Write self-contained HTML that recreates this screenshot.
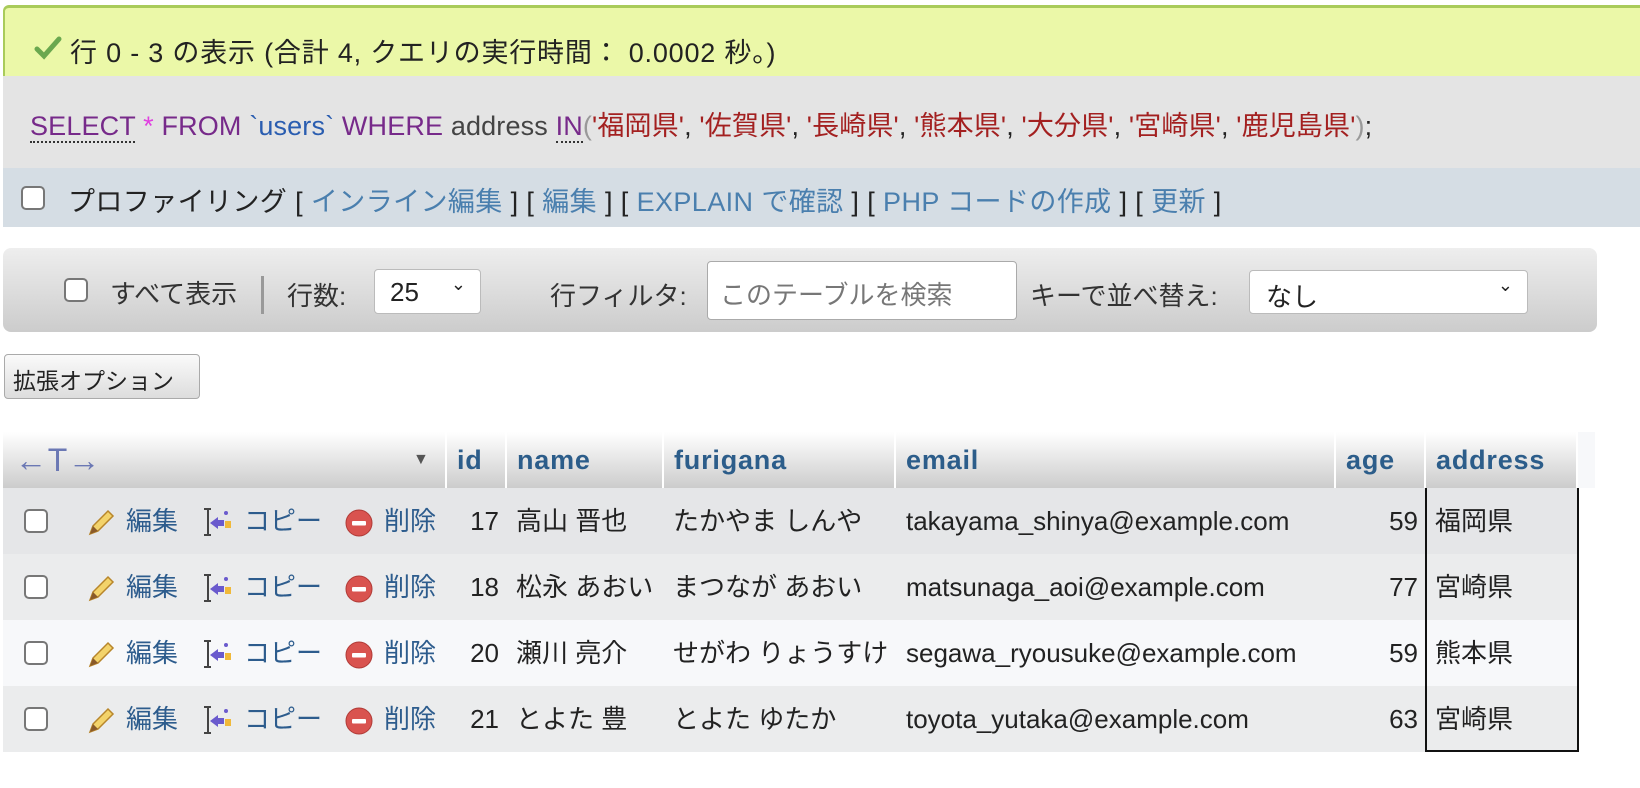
<!DOCTYPE html>
<html><head><meta charset="utf-8"><style>
*{box-sizing:border-box;margin:0;padding:0}
body{width:1640px;height:788px;background:#fff;font-family:"Liberation Sans","Noto Sans CJK JP",sans-serif;font-size:26px;color:#222;position:relative;overflow:hidden}
.a{position:absolute;white-space:nowrap}
.lk{color:#4a7fae}
.cb{position:absolute;width:24px;height:24px;border:2px solid #777;border-radius:5px;background:#fff}
.th{position:absolute;top:432px;height:56px;background:linear-gradient(#fff,#ccc);font-weight:bold;font-size:27px;letter-spacing:0.8px;color:#2c5d8a;line-height:56px;padding-left:10px;border-right:2px solid #fff}
.row{position:absolute;left:3px;width:1575px;height:66px}
.t{position:absolute;line-height:66px}
.bl{color:#2d5c8d}
</style></head><body>
<div class="a" style="left:3px;top:5px;width:1640px;height:71px;background:#ebf8a8;border-top:3px solid #a9cb5a;border-left:2px solid #a9cb5a;border-radius:6px 0 0 0"></div>
<svg class="a" style="left:34px;top:36px" width="28" height="24" viewBox="0 0 28 24"><path d="M3 13 L10 20 L25 3" stroke="#6aa84f" stroke-width="5" fill="none" stroke-linecap="round"/></svg>
<div class="a" style="left:70px;top:31px;font-size:27px;letter-spacing:0.8px">行 0 - 3 の表示 (合計 4, クエリの実行時間： 0.0002 秒。)</div>
<div class="a" style="left:3px;top:76px;width:1640px;height:92px;background:#e4e4e4"></div>
<div class="a" style="left:30px;top:104px;font-size:27px;letter-spacing:0.15px"><span style="color:#772a8a;border-bottom:2px dotted #333">SELECT</span> <span style="color:#e040e0">*</span> <span style="color:#772a8a">FROM</span> <span style="color:#2a5db0">`users`</span> <span style="color:#772a8a">WHERE</span> <span style="color:#444">address</span> <span style="color:#772a8a;border-bottom:2px dotted #333">IN</span><span style="color:#999">(</span><span style="color:#a32020">'福岡県'</span>, <span style="color:#a32020">'佐賀県'</span>, <span style="color:#a32020">'長崎県'</span>, <span style="color:#a32020">'熊本県'</span>, <span style="color:#a32020">'大分県'</span>, <span style="color:#a32020">'宮崎県'</span>, <span style="color:#a32020">'鹿児島県'</span><span style="color:#999">)</span>;</div>
<div class="a" style="left:3px;top:168px;width:1640px;height:59px;background:#d5dde4"></div>
<div class="cb" style="left:21px;top:186px"></div>
<div class="a" style="left:68px;top:180px;font-size:27px;letter-spacing:0.4px">プロファイリング [ <span class="lk">インライン編集</span> ] [ <span class="lk">編集</span> ] [ <span class="lk">EXPLAIN で確認</span> ] [ <span class="lk">PHP コードの作成</span> ] [ <span class="lk">更新</span> ]</div>

<div class="a" style="left:3px;top:248px;width:1594px;height:84px;background:linear-gradient(#eee,#ccc);border-radius:8px"></div>
<div class="cb" style="left:64px;top:278px"></div>
<div class="a" style="left:110px;top:274px;color:#333">すべて表示</div>
<div class="a" style="left:261px;top:276px;width:3px;height:38px;background:#999"></div>
<div class="a" style="left:287px;top:276px;color:#333">行数:</div>
<div class="a" style="left:374px;top:269px;width:107px;height:45px;background:#fff;border:1px solid #bbb;border-radius:4px;padding:7px 15px">25<span style="position:absolute;right:14px;top:4px;font-size:18px">⌄</span></div>
<div class="a" style="left:550px;top:276px;color:#333">行フィルタ:</div>
<div class="a" style="left:707px;top:261px;width:310px;height:59px;background:#fff;border:1px solid #aaa;border-radius:4px;padding:13px 12px;color:#777">このテーブルを検索</div>
<div class="a" style="left:1030px;top:276px;color:#333">キーで並べ替え:</div>
<div class="a" style="left:1249px;top:270px;width:279px;height:44px;background:#fff;border:1px solid #bbb;border-radius:4px;padding:6px 16px">なし<span style="position:absolute;right:14px;top:4px;font-size:18px">⌄</span></div>

<div class="a" style="left:4px;top:354px;width:196px;height:45px;background:linear-gradient(#fafafa,#ddd);border:1px solid #aaa;border-radius:4px;font-size:23px;padding:7px 8px">拡張オプション</div>

<div class="th" style="left:3px;width:444px;color:#6b78b4;font-weight:normal;font-size:32px;padding-left:12px">←T→<span style="position:absolute;left:410px;top:0;font-size:16px;color:#555">▼</span></div>
<div class="th" style="left:447px;width:60px">id</div>
<div class="th" style="left:507px;width:157px">name</div>
<div class="th" style="left:664px;width:232px">furigana</div>
<div class="th" style="left:896px;width:440px">email</div>
<div class="th" style="left:1336px;width:90px">age</div>
<div class="th" style="left:1426px;width:152px">address</div>
<div class="th" style="left:1578px;width:17px;background:#f7f8fa;border:none"></div>

<div class="row" style="top:488px;background:#e5e6e8"></div>
<div class="row" style="top:554px;background:#ebeced"></div>
<div class="row" style="top:620px;background:#f7f8fa"></div>
<div class="row" style="top:686px;background:#ebeced"></div>
<div class="a" style="left:1425px;top:488px;width:154px;height:264px;border-left:2px solid #111;border-right:2px solid #111;border-bottom:2px solid #111"></div>

<div id="rows"></div>
<script>
var d=[["17","高山 晋也","たかやま しんや","takayama_shinya@example.com","59","福岡県"],["18","松永 あおい","まつなが あおい","matsunaga_aoi@example.com","77","宮崎県"],["20","瀬川 亮介","せがわ りょうすけ","segawa_ryousuke@example.com","59","熊本県"],["21","とよた 豊","とよた ゆたか","toyota_yutaka@example.com","63","宮崎県"]];
var h="";
d.forEach(function(r,i){var y=488+i*66;
h+='<div class="cb" style="left:24px;top:'+(y+21)+'px"></div>';
h+='<svg class="a" style="left:86px;top:'+(y+20)+'px" width="30" height="30" viewBox="0 0 30 30"><path d="M4 26 L7 18 L22 3 L27 8 L12 23 Z" fill="#f3d36b" stroke="#b8862b" stroke-width="1.5"/><path d="M4 26 L7 18 L12 23 Z" fill="#8a5a2a"/></svg>';
h+='<div class="t bl" style="left:126px;top:'+y+'px">編集</div>';
h+='<svg class="a" style="left:202px;top:'+(y+18)+'px" width="30" height="32" viewBox="0 0 30 32"><path d="M2 3h7M6 3v26M2 29h7" stroke="#444" stroke-width="2" fill="none"/><path d="M8 17 L16 11 V14 H22 V20 H16 V23 Z" fill="#6a5acd"/><rect x="23" y="15" width="6" height="7" fill="#f0b93a"/><circle cx="24" cy="7" r="2" fill="#6a5acd"/></svg>';
h+='<div class="t bl" style="left:244px;top:'+y+'px">コピー</div>';
h+='<svg class="a" style="left:345px;top:'+(y+21)+'px" width="28" height="28" viewBox="0 0 28 28"><circle cx="14" cy="14" r="13" fill="#d9534f"/><circle cx="14" cy="14" r="13" fill="none" stroke="#b03a36"/><rect x="7" y="12" width="14" height="4.5" rx="1" fill="#fff"/></svg>';
h+='<div class="t bl" style="left:384px;top:'+y+'px">削除</div>';
h+='<div class="t" style="left:447px;width:52px;text-align:right;top:'+y+'px">'+r[0]+'</div>';
h+='<div class="t" style="left:516px;top:'+y+'px">'+r[1]+'</div>';
h+='<div class="t" style="left:673px;top:'+y+'px">'+r[2]+'</div>';
h+='<div class="t" style="left:906px;top:'+y+'px">'+r[3]+'</div>';
h+='<div class="t" style="left:1336px;width:82px;text-align:right;top:'+y+'px">'+r[4]+'</div>';
h+='<div class="t" style="left:1435px;top:'+y+'px">'+r[5]+'</div>';
});
document.getElementById("rows").innerHTML=h;
</script>
</body></html>
